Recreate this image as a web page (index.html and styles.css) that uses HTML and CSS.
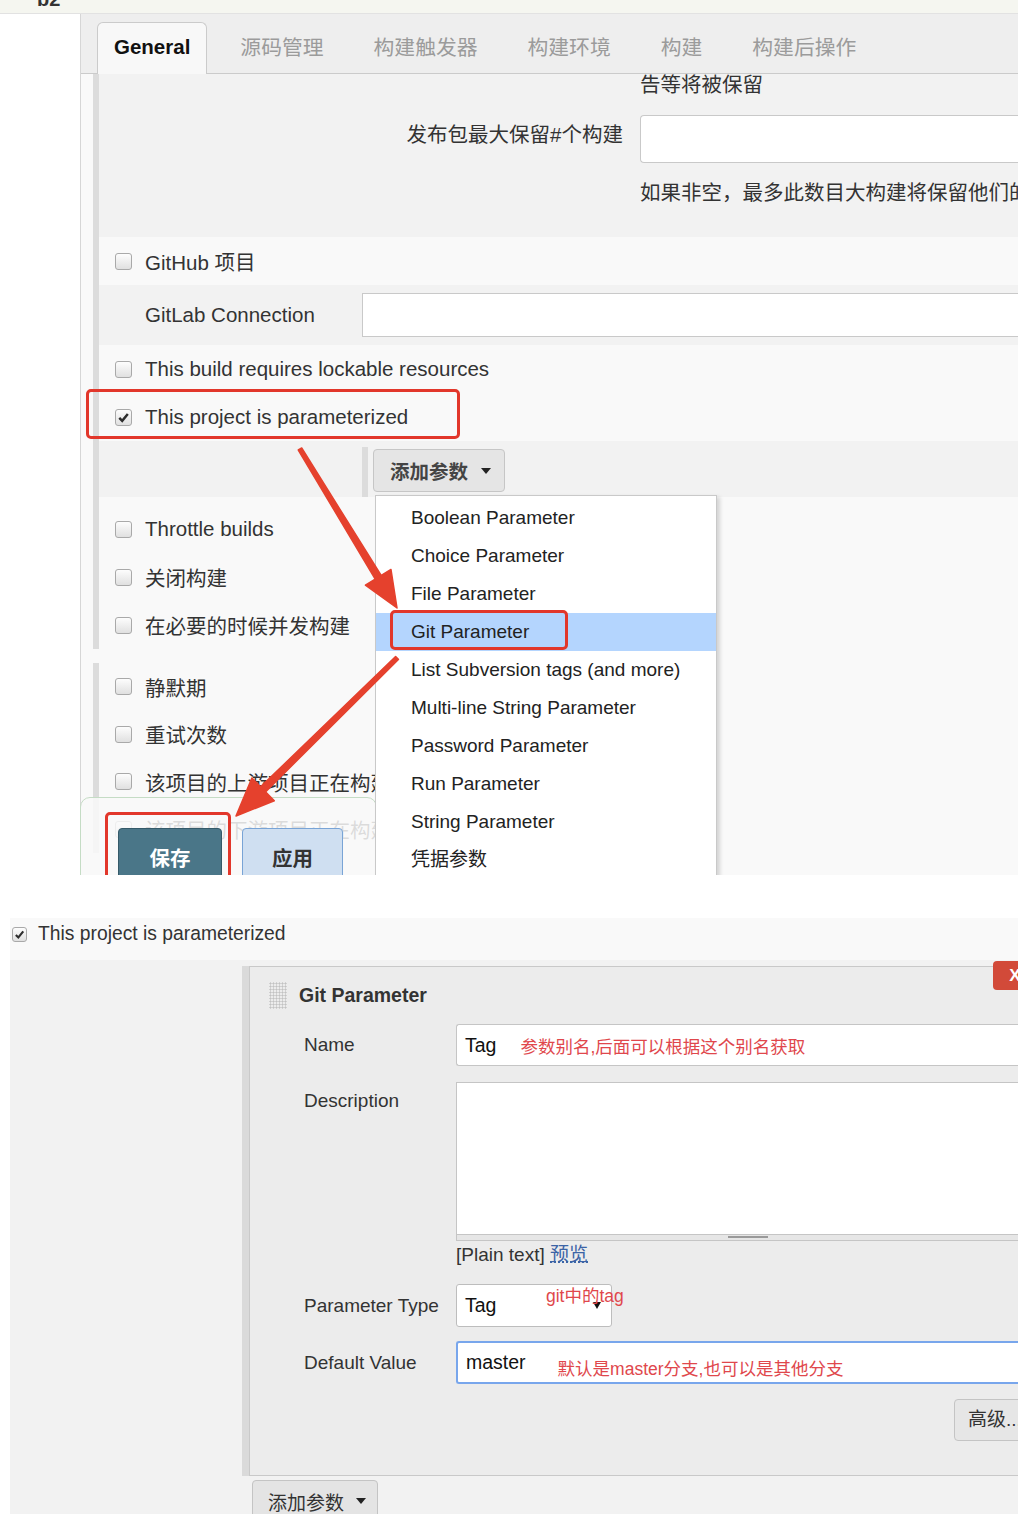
FILE: index.html
```html
<!DOCTYPE html>
<html lang="zh-CN">

<head>
    <meta charset="UTF-8">
    <meta name="viewport" content="width=device-width, initial-scale=1.0">
    <title>Jenkins - 参数化构建</title>
    <link rel="stylesheet" href="styles.css">
</head>

<body>
    <!-- first shot: job config with the add-parameter menu open -->
    <div class="shot shot-top">
        <div class="crumb"><span>b2</span></div>
        <div class="job">
            <div class="gutter"></div>
            <div class="config">
                <div class="tabs">
                    <div class="tab active">General</div>
                    <div class="tab">源码管理</div>
                    <div class="tab">构建触发器</div>
                    <div class="tab">构建环境</div>
                    <div class="tab">构建</div>
                    <div class="tab">构建后操作</div>
                </div>
                <div class="config-body">
                    <div class="sect">
                        <div class="help help-cut row-gray">告等将被保留</div>
                        <div class="field row-gray">
                            <label>发布包最大保留#个构建</label>
                            <div class="text-box"></div>
                        </div>
                        <div class="help help-last row-gray">如果非空，最多此数目大构建将保留他们的</div>

                        <div class="check-row"><span class="cb"></span>GitHub 项目</div>
                        <div class="gitlab-row">
                            <label>GitLab Connection</label>
                            <div class="text-box"></div>
                        </div>
                        <div class="check-row"><span class="cb"></span>This build requires lockable resources</div>
                        <div class="check-row"><span class="cb checked"><svg viewBox="0 0 16 16"><path d="M3.5 8.5 L6.6 11.6 L12.6 4.2" /></svg></span>This project is parameterized</div>
                        <div class="add-row">
                            <div class="repeat">
                                <div class="btn-add">添加参数 <span class="caret"></span></div>
                            </div>
                        </div>
                        <div class="spacer"></div>
                        <div class="check-row"><span class="cb"></span>Throttle builds</div>
                        <div class="check-row"><span class="cb"></span>关闭构建</div>
                        <div class="check-row"><span class="cb"></span>在必要的时候并发构建</div>
                    </div>
                    <div class="sect sect-second">
                        <div class="check-row short"><span class="cb"></span>静默期</div>
                        <div class="check-row short"><span class="cb"></span>重试次数</div>
                        <div class="check-row short"><span class="cb"></span>该项目的上游项目正在构建</div>
                        <div class="check-row short"><span class="cb"></span>该项目的下游项目正在构建</div>
                    </div>
                </div>
            </div>
        </div>

        <div class="bottom-bar">
            <div class="btn-save">保存</div>
            <div class="btn-apply">应用</div>
        </div>

        <ul class="menu">
            <li>Boolean Parameter</li>
            <li>Choice Parameter</li>
            <li>File Parameter</li>
            <li class="sel">Git Parameter</li>
            <li>List Subversion tags (and more)</li>
            <li>Multi-line String Parameter</li>
            <li>Password Parameter</li>
            <li>Run Parameter</li>
            <li>String Parameter</li>
            <li>凭据参数</li>
        </ul>

        <!-- red annotations drawn over the screenshot -->
        <div class="mark mark-param"></div>
        <div class="mark mark-git"></div>
        <div class="mark mark-save"></div>
        <svg class="arrows" width="1018" height="875" viewBox="0 0 1018 875">
            <polygon points="298.3,450 301.7,448 381.2,575.5 375.2,579.1" />
            <polygon points="397,608 391,569.5 365.4,585.1" />
            <polygon points="398.4,659.4 395.6,656.6 260.6,786.9 265.5,791.9" />
            <polygon points="236,816 274.3,800.8 251.9,778" />
        </svg>
    </div>

    <!-- second shot: the git parameter block -->
    <div class="shot shot-bottom">
        <div class="param-head">
            <span class="cb cb-sm checked"><svg viewBox="0 0 16 16"><path d="M3.5 8.5 L6.6 11.6 L12.6 4.2" /></svg></span>
            This project is parameterized
        </div>
        <div class="param-area">
            <div class="param-repeat">
                <div class="param-card">
                    <div class="btn-del">X</div>
                    <div class="card-head">
                        <span class="handle"></span>
                        <b>Git Parameter</b>
                    </div>

                    <div class="prow">
                        <label class="lbl-mid h42">Name</label>
                        <div class="pinput h42">
                            <span class="val">Tag</span>
                            <span class="note note-name">参数别名,后面可以根据这个别名获取</span>
                        </div>
                    </div>

                    <div class="prow prow-desc">
                        <label class="lbl-top">Description</label>
                        <div>
                            <div class="textarea"></div>
                            <div class="resize"><span></span></div>
                            <div class="plain">[Plain text] <a href="#">预览</a></div>
                        </div>
                    </div>

                    <div class="prow prow-type">
                        <label class="lbl-mid h43">Parameter Type</label>
                        <div class="select">
                            <span class="val">Tag</span>
                            <span class="sel-caret"></span>
                            <span class="note note-type">git中的tag</span>
                        </div>
                    </div>

                    <div class="prow prow-default">
                        <label class="lbl-mid h43">Default Value</label>
                        <div class="pinput h43 focus">
                            <span class="val">master</span>
                            <span class="note note-default">默认是master分支,也可以是其他分支</span>
                        </div>
                    </div>

                    <div class="adv-row">
                        <div class="btn-adv">高级...</div>
                    </div>
                </div>
            </div>
            <div class="btn-add2">添加参数 <span class="caret"></span></div>
        </div>
    </div>
</body>

</html>
```

FILE: styles.css
```css
*,
*::before,
*::after {
    box-sizing: border-box;
}

body {
    margin: 0;
    background: #fff;
    font-family: "Liberation Sans", Arial, "Noto Sans CJK SC", sans-serif;
    color: #333;
}

.shot {
    position: relative;
    width: 1018px;
    overflow: hidden;
}

/* ---------- top shot ---------- */

.shot-top {
    height: 875px;
    font-size: 20.5px;
}

.crumb {
    height: 14px;
    background: #f5f6f0;
    border-bottom: 1px solid #e2e2e2;
    overflow: hidden;
    padding-left: 37px;
}

.crumb span {
    display: block;
    margin-top: -13px;
    font-size: 20px;
    line-height: 24px;
    font-weight: bold;
}

.job {
    display: flex;
    height: 861px;
}

.gutter {
    width: 80px;
    flex: none;
}

.config {
    flex: 1;
    border-left: 1px solid #d6d6d6;
    background: #f9f9f9;
}

.tabs {
    display: flex;
    align-items: flex-end;
    height: 60px;
    padding-left: 16px;
    background: #eee;
    border-bottom: 1px solid #cbcbcb;
}

.tab {
    padding: 0 25px;
    line-height: 50px;
    font-size: 20.8px;
    color: #9b9b9b;
    white-space: nowrap;
}

.tab.active {
    height: 52px;
    margin-bottom: -1px;
    margin-right: 8px;
    padding: 0 16px;
    line-height: 48px;
    font-size: 20.5px;
    background: #f8f8f8;
    border: 1px solid #cbcbcb;
    border-bottom: none;
    border-radius: 6px 6px 0 0;
    color: #111;
    font-weight: bold;
}

.config-body {
    padding-left: 12px;
}

.sect {
    border-left: 6px solid #dcdcdc;
}

.sect-second {
    margin-top: 14px;
}

.row-gray {
    background: #f2f2f2;
}

.help {
    padding-left: 541px;
    line-height: 26px;
    white-space: nowrap;
    overflow: hidden;
}

.help-cut {
    height: 26px;
    line-height: 22px;
}

.help-last {
    padding-top: 17px;
    padding-bottom: 31px;
}

.field {
    display: grid;
    grid-template-columns: 524px 1fr;
    column-gap: 17px;
    padding-top: 15px;
}

.field label {
    text-align: right;
    line-height: 40px;
}

.text-box {
    height: 48px;
    background: #fff;
    border: 1px solid #c9c9c9;
    border-right: none;
    border-radius: 4px 0 0 4px;
}

.check-row {
    display: flex;
    align-items: center;
    gap: 13px;
    height: 48px;
    padding-left: 16px;
    white-space: nowrap;
}

.check-row.short {
    height: 47.5px;
}

.cb {
    flex: none;
    width: 17px;
    height: 17px;
    border: 1px solid #a9a9a9;
    border-radius: 3px;
    background: linear-gradient(#fdfdfd, #e0e0e0);
}

.cb svg {
    display: block;
    width: 100%;
    height: 100%;
}

.cb svg path {
    fill: none;
    stroke: #2d2d2d;
    stroke-width: 2.6;
}

.gitlab-row {
    display: flex;
    align-items: center;
    height: 60px;
    padding-left: 46px;
    background: #f2f2f2;
}

.gitlab-row label {
    width: 217px;
    flex: none;
}

.gitlab-row .text-box {
    flex: 1;
    height: 44px;
    border-radius: 0;
}

.add-row {
    height: 56px;
    padding: 6px 0 0 263px;
    background: #f2f2f2;
}

.repeat {
    height: 50px;
    padding: 2px 0 0 5px;
    border-left: 6px solid #dcdcdc;
}

.btn-add {
    display: inline-flex;
    align-items: center;
    gap: 13px;
    height: 43px;
    padding: 0 13px 0 16px;
    background: #e5e5e5;
    border: 1px solid #c6c6c6;
    border-radius: 4px;
    font-size: 19.5px;
    font-weight: bold;
    color: #444;
}

.caret {
    width: 0;
    height: 0;
    border-left: 5px solid transparent;
    border-right: 5px solid transparent;
    border-top: 6px solid #222;
}

.spacer {
    height: 8px;
}

.bottom-bar {
    position: absolute;
    left: 80px;
    top: 797px;
    width: 297px;
    height: 110px;
    display: flex;
    gap: 20px;
    padding: 30px 0 0 37px;
    background: rgba(249, 249, 249, 0.85);
    border: 1px solid #c5dcc5;
    border-radius: 10px;
}

.btn-save,
.btn-apply {
    height: 62px;
    line-height: 60px;
    text-align: center;
    border-radius: 4px;
    font-weight: bold;
}

.btn-save {
    width: 104px;
    background: #4a7688;
    border: 1px solid #355a69;
    color: #fff;
}

.btn-apply {
    width: 101px;
    background: #cfdff1;
    border: 1px solid #79a4d6;
    color: #333;
}

.menu {
    position: absolute;
    left: 375px;
    top: 495px;
    width: 342px;
    height: 400px;
    margin: 0;
    padding: 3px 0 0;
    list-style: none;
    background: #fff;
    border: 1px solid #c9c9c9;
    box-shadow: 3px 2px 4px rgba(0, 0, 0, 0.15);
    font-size: 19px;
    color: #222;
}

.menu li {
    line-height: 38px;
    padding-left: 35px;
    white-space: nowrap;
}

.menu li.sel {
    background: #b4d5fe;
}

.mark {
    position: absolute;
    border: 3px solid #e2372b;
    border-radius: 5px;
}

.mark-param {
    left: 86px;
    top: 389px;
    width: 374px;
    height: 50px;
}

.mark-git {
    left: 390px;
    top: 610px;
    width: 178px;
    height: 40px;
}

.mark-save {
    left: 105px;
    top: 812px;
    width: 126px;
    height: 80px;
}

.arrows {
    position: absolute;
    left: 0;
    top: 0;
    pointer-events: none;
}

.arrows polygon {
    fill: #e5412d;
    stroke: #e5412d;
    stroke-width: 1.5;
    stroke-linejoin: round;
}

/* ---------- bottom shot ---------- */

.shot-bottom {
    height: 596px;
    margin-top: 43px;
    font-size: 19px;
}

.param-head {
    display: flex;
    align-items: center;
    gap: 11px;
    height: 42px;
    margin-left: 10px;
    padding: 0 0 10px 2px;
    background: #f9f9f9;
    font-size: 19.3px;
}

.cb-sm {
    width: 15px;
    height: 15px;
}

.param-area {
    height: 554px;
    margin-left: 10px;
    padding: 6px 0 0 232px;
    background: #f2f2f2;
}

.param-repeat {
    margin-right: -4px;
    border-left: 7px solid #dadada;
}

.param-card {
    position: relative;
    height: 510px;
    background: #ececec;
    border: 1px solid #c9c9c9;
}

.btn-del {
    position: absolute;
    top: -6px;
    right: -16px;
    width: 44px;
    height: 29px;
    line-height: 29px;
    text-align: center;
    background: #d24a39;
    border-radius: 4px;
    color: #fff;
    font-weight: bold;
    font-size: 17px;
}

.card-head {
    display: flex;
    align-items: center;
    gap: 12px;
    height: 57px;
    padding-left: 19px;
    font-size: 19.5px;
}

.handle {
    width: 18px;
    height: 27px;
    background-image: radial-gradient(circle, #c2c2c2 0.9px, transparent 1.2px);
    background-size: 3px 3px;
}

.prow {
    display: grid;
    grid-template-columns: 152px 1fr;
    padding-left: 54px;
}

.lbl-mid.h42 {
    line-height: 42px;
}

.lbl-mid.h43 {
    line-height: 43px;
}

.lbl-top {
    padding-top: 8px;
    line-height: 22px;
}

.pinput {
    display: flex;
    align-items: center;
    padding-left: 8px;
    background: #fff;
    border: 1px solid #c5c5c5;
    border-right: none;
    border-radius: 3px 0 0 3px;
    white-space: nowrap;
}

.pinput.h42 {
    height: 42px;
}

.pinput.h43 {
    height: 43px;
}

.pinput.focus {
    border: 2px solid #78a6ec;
    border-right: none;
}

.val {
    font-size: 19.5px;
    color: #111;
}

.note {
    color: #e0474c;
    font-size: 17.5px;
    white-space: nowrap;
}

.note-name {
    margin-left: 24px;
}

.note-default {
    margin-left: 32px;
    padding-top: 10px;
}

.prow-desc {
    margin-top: 16px;
}

.textarea {
    height: 153px;
    background: #fff;
    border: 1px solid #c5c5c5;
    border-right: none;
}

.resize {
    height: 6px;
    padding: 1px 0 0 271px;
    background: #e6e6e6;
    border: 1px solid #c5c5c5;
    border-top: none;
}

.resize span {
    display: block;
    width: 40px;
    height: 2px;
    background: #9a9a9a;
}

.plain {
    margin-top: 2px;
    line-height: 24px;
}

.plain a {
    color: #3c64a6;
    text-decoration: underline dotted;
}

.prow-type {
    margin-top: 17px;
}

.select {
    position: relative;
    display: flex;
    align-items: center;
    justify-content: space-between;
    width: 156px;
    height: 43px;
    padding: 0 10px 0 8px;
    background: #fff;
    border: 1px solid #bdbdbd;
    border-radius: 3px;
}

.sel-caret {
    width: 0;
    height: 0;
    border-left: 4px solid transparent;
    border-right: 4px solid transparent;
    border-top: 7px solid #111;
}

.note-type {
    position: absolute;
    left: 89px;
    top: 0;
    line-height: 22px;
}

.prow-default {
    margin-top: 14px;
}

.adv-row {
    margin-top: 15px;
    padding-left: 704px;
}

.btn-adv {
    width: 80px;
    height: 42px;
    line-height: 40px;
    padding-left: 13px;
    background: #e6e6e6;
    border: 1px solid #c4c4c4;
    border-radius: 4px;
    white-space: nowrap;
}

.btn-add2 {
    display: inline-flex;
    align-items: center;
    gap: 12px;
    height: 42px;
    margin: 4px 0 0 10px;
    padding: 0 11px 0 15px;
    background: #e4e4e4;
    border: 1px solid #c4c4c4;
    border-radius: 4px;
}
```
